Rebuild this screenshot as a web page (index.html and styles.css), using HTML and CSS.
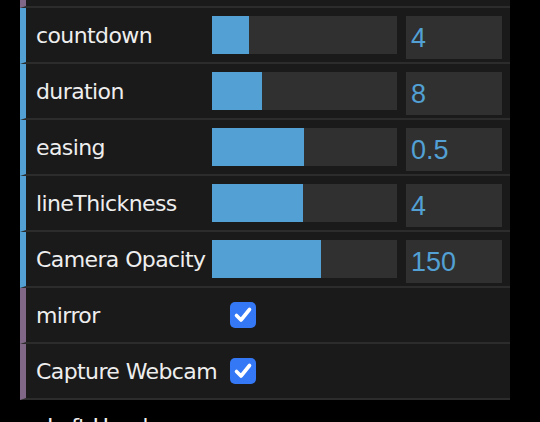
FILE: index.html
```html
<!DOCTYPE html>
<html>
<head>
<meta charset="utf-8">
<link rel="stylesheet" href="styles.css">
</head>
<body>
<div class="gui">
  <ul class="rows">
    <li class="row boolean"></li>
    <li class="row number">
      <span class="name">countdown</span>
      <div class="slider"><div class="fill" style="width:37px"></div></div>
      <div class="value">4</div>
    </li>
    <li class="row number">
      <span class="name">duration</span>
      <div class="slider"><div class="fill" style="width:50px"></div></div>
      <div class="value">8</div>
    </li>
    <li class="row number">
      <span class="name">easing</span>
      <div class="slider"><div class="fill" style="width:92px"></div></div>
      <div class="value">0.5</div>
    </li>
    <li class="row number">
      <span class="name">lineThickness</span>
      <div class="slider"><div class="fill" style="width:91px"></div></div>
      <div class="value">4</div>
    </li>
    <li class="row number">
      <span class="name">Camera Opacity</span>
      <div class="slider"><div class="fill" style="width:109px"></div></div>
      <div class="value">150</div>
    </li>
    <li class="row boolean">
      <span class="name">mirror</span>
      <span class="check">
        <svg viewBox="0 0 26 26" width="26" height="26"><path d="M6.5 13.5 L11 18 L19.5 7.5" fill="none" stroke="#fff" stroke-width="3.6" stroke-linecap="round" stroke-linejoin="round"/></svg>
      </span>
    </li>
    <li class="row boolean">
      <span class="name">Capture Webcam</span>
      <span class="check">
        <svg viewBox="0 0 26 26" width="26" height="26"><path d="M6.5 13.5 L11 18 L19.5 7.5" fill="none" stroke="#fff" stroke-width="3.6" stroke-linecap="round" stroke-linejoin="round"/></svg>
      </span>
    </li>
  </ul>
  <div class="title"><span class="arrow"></span>Left Hand</div>
</div>
</body>
</html>
```

FILE: styles.css
```css
html, body {
  margin: 0;
  padding: 0;
  background: #000;
  width: 540px;
  height: 422px;
  overflow: hidden;
}

.gui {
  width: 490px;
  margin-left: 20px;
  margin-top: -48px;
  font-family: "DejaVu Sans", "Lucida Grande", sans-serif;
}

.rows {
  list-style: none;
  margin: 0;
  padding: 0;
}

.row {
  height: 54px;
  background: #1a1a1a;
  border-bottom: 2px solid #2c2c2c;
  border-left: 6px solid #806787;
  display: flex;
  align-items: flex-start;
  box-sizing: content-box;
}

.row.number {
  border-left-color: #52a0d4;
}

.name {
  width: 186px;
  padding-left: 10px;
  box-sizing: border-box;
  flex: none;
  color: #eee;
  font-size: 22px;
  letter-spacing: -0.6px;
  line-height: 55px;
  white-space: nowrap;
}

.slider {
  margin-top: 8px;
  width: 185px;
  height: 38px;
  background: #303030;
  flex: none;
}

.fill {
  height: 100%;
  background: #52a0d4;
}

.value {
  margin-top: 8px;
  margin-left: 9px;
  width: 96px;
  height: 43px;
  background: #303030;
  color: #52a0d4;
  font-family: "Liberation Sans", Arial, sans-serif;
  font-size: 27px;
  line-height: 44px;
  padding-left: 5px;
  box-sizing: border-box;
  flex: none;
}

.check {
  margin-top: 14px;
  margin-left: 18px;
  width: 26px;
  height: 26px;
  border-radius: 5px;
  background: #3478f6;
  display: block;
  flex: none;
}

.check svg {
  display: block;
}

.title {
  height: 54px;
  line-height: 54px;
  color: #eee;
  font-size: 22px;
  letter-spacing: -0.6px;
  padding-left: 15px;
  display: flex;
  align-items: center;
  gap: 6px;
}

.arrow {
  width: 0;
  height: 0;
  border-left: 6px solid #ccc;
  border-top: 4px solid transparent;
  border-bottom: 4px solid transparent;
}
```
